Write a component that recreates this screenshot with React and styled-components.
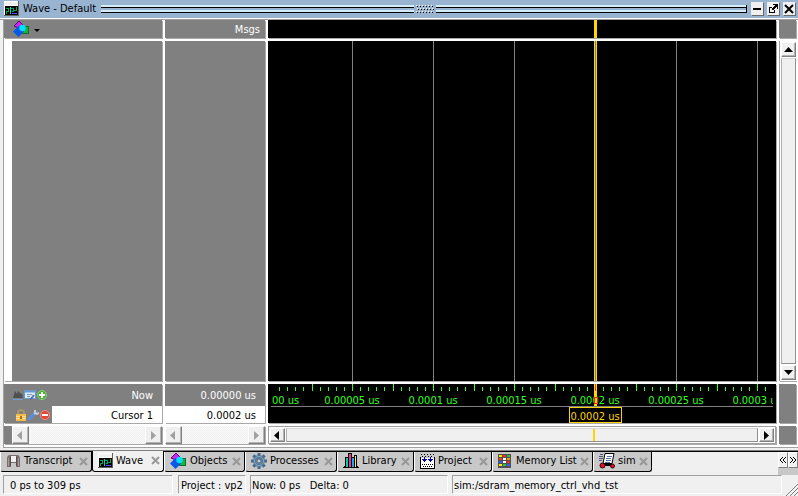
import React from "react";
import styled, { createGlobalStyle } from "styled-components";

const GlobalStyle = createGlobalStyle`
  * { box-sizing: border-box; }
  body {
    margin: 0;
    background: #f0f0f0;
    color: #000;
    font: 11px/16px "DejaVu Sans Condensed", Tahoma, "Noto Sans", sans-serif;
  }
  svg { display: block; flex: none; }
`;

const Window = styled.main`
  display: flex;
  flex-direction: column;
  min-height: 100vh;
  overflow: hidden;
`;

const TitleBar = styled.header`
  display: flex;
  align-items: center;
  height: 20px;
  padding: 0 3px 2px 4px;
  background: #99b4d1;
  border-bottom: 1px solid #a0a0a0;
  box-shadow: inset 0 -1px 0 #fff;
`;

const Title = styled.h1`
  margin: 0 5px 0 4px;
  font: inherit;
  white-space: nowrap;
`;

const Stripes = styled.div`
  flex: ${(p) => (p.$end ? "310" : "312")};
  height: 8px;
  background: linear-gradient(
    #d2ecfa 0 2px, #000 2px 3px, #99b4d1 3px 5px,
    #d2ecfa 5px 7px, #000 7px 8px
  );
  border-right: ${(p) => (p.$end ? "1px solid #000" : "0")};
`;

const TitleButtons = styled.div`
  display: flex;
  gap: 4px;
  margin-left: 4px;
`;

const TitleButton = styled.button`
  display: grid;
  place-items: center;
  width: 12px;
  height: 13px;
  padding: 0;
  border: 0;
  background: #f0f0f0;
  box-shadow: 1px 1px 0 #696969;
`;

const Panes = styled.section`
  flex: 1;
  display: grid;
  grid-template-columns: 158px 100px minmax(0, 1fr) 17px;
  grid-template-rows: 18px minmax(0, 1fr) 39px 18px;
  gap: 3px;
  margin: 0 0 2px 3px;
  padding: 0 2px 3px 0;
  background: #fff;
  border-left: 1px solid #a0a0a0;
  border-bottom: 1px solid #a0a0a0;
`;

const Pane = styled.div`
  display: flex;
  flex-direction: ${(p) => (p.$column ? "column" : "row")};
  align-items: ${(p) => (p.$column ? "stretch" : "center")};
  justify-content: ${(p) => (p.$right ? "flex-end" : "flex-start")};
  min-width: 0;
  padding: ${(p) => p.$pad || "0"};
  background: ${(p) => p.$bg || "#808080"};
  color: #fff;
  box-shadow: 1px 1px 0 #a9a9a9;
`;

const MenuButton = styled.button`
  display: flex;
  align-items: center;
  gap: 4px;
  padding: 0;
  border: 0;
  background: none;
`;

const NameList = styled.div`
  flex: 1;
  border-left: 8px solid #fff;
`;

const CursorRow = styled.div`
  display: flex;
  align-items: center;
  height: ${(p) => (p.$selected ? "17px" : "22px")};
  color: ${(p) => (p.$selected ? "#000" : "#fff")};
`;

const CursorTools = styled.div`
  display: flex;
  width: 48px;
  padding-left: ${(p) => (p.$selected ? "11px" : "8px")};
`;

const ToolButton = styled.button`
  width: 12px;
  height: 14px;
  padding: 0;
  border: 0;
  background: none;
`;

const CursorText = styled.div`
  flex: 1;
  align-self: stretch;
  display: flex;
  align-items: center;
  justify-content: flex-end;
  padding: 2px 9px 0 0;
  background: ${(p) => (p.$selected ? "#fff" : "transparent")};
`;

const ScrollTrack = styled.div`
  flex: 1;
  align-self: stretch;
  display: flex;
  flex-direction: ${(p) => (p.$vertical ? "column" : "row")};
  gap: 1px;
  padding: ${(p) => (p.$stippled ? "0" : "1px")};
  background: ${(p) =>
    p.$stippled
      ? "repeating-conic-gradient(#f0f0f0 0 25%, #fafafa 0 50%) 0 0 / 2px 2px"
      : "#fff"};
  border: ${(p) => (p.$stippled ? "0" : "1px solid #a0a0a0")};
  border-width: ${(p) => (p.$vertical ? "0 0 0 1px" : null)};
`;

const ScrollButton = styled.button`
  display: grid;
  place-items: center;
  flex: none;
  width: ${(p) => (p.$wide ? "17px" : "15px")};
  min-height: ${(p) => (p.$tall ? "15px" : "0")};
  padding: 0;
  background: #f0f0f0;
  border: 1px solid;
  border-color: #fff #808080 #808080 #fff;
  box-shadow: inset -1px -1px 0 #b4b4b4;
`;

const Thumb = styled.div`
  flex: 1;
  background: #f0f0f0;
  border: 1px solid;
  border-color: #d8d8d8 #909090 #909090 #b0b0b0;
`;

const Spacer = styled.div`
  flex: 1;
`;

const TabBar = styled.nav`
  display: flex;
  height: 25px;
  padding-top: 1px;
  border-top: 1px solid #808080;
  background: linear-gradient(#000 0 1px, #f0f0f0 1px);
`;

const Tab = styled.div`
  display: flex;
  align-items: center;
  flex: none;
  width: ${(p) => p.$width}px;
  height: ${(p) => (p.$active ? "21px" : "20px")};
  margin-top: ${(p) => (p.$active ? "-1px" : "0")};
  padding: 0 3px 1px 5px;
  background: ${(p) => (p.$active ? "#f0f0f0" : "#c8c8c8")};
  border: 1px solid #000;
  border-top: 0;
  border-left-color: ${(p) => (p.$active ? "#000" : "#fff")};
  border-radius: 0 0 3px 3px;
`;

const TabLabel = styled.button`
  display: flex;
  align-items: center;
  flex: 1;
  gap: 3px;
  padding: 0;
  border: 0;
  background: none;
  color: inherit;
  font: inherit;
  line-height: 18px;
  white-space: nowrap;
`;

const CloseButton = styled.button`
  width: 9px;
  height: 9px;
  padding: 0;
  border: 0;
  background: none;
`;

const TabScroller = styled.div`
  display: flex;
  width: 20px;
  margin-left: auto;
  padding-bottom: 7px;
  background: #c8c8c8;
`;

const TabScrollButton = styled.button`
  display: grid;
  place-items: center;
  flex: none;
  width: 10px;
  padding: 0;
  background: #f0f0f0;
  border: 1px solid;
  border-color: #fff #808080 #808080 #fff;
`;

const StatusBar = styled.footer`
  display: flex;
  height: 21px;
  padding: 0 0 2px 3px;
`;

const StatusCell = styled.div`
  flex: ${(p) => (p.$width ? "none" : "1")};
  width: ${(p) => (p.$width ? p.$width + "px" : "auto")};
  margin-right: ${(p) => p.$gap}px;
  padding: 1px 0 0 ${(p) => p.$indent || 1}px;
  border: 1px solid;
  border-color: #a0a0a0 #fff #fff #a0a0a0;
  line-height: 17px;
  white-space: pre;
`;

const Grip = styled.div`
  align-self: flex-end;
  margin-bottom: -2px;
`;

/* ---------- drawings ---------- */

const WaveIcon = () => (
  <svg width="15" height="15" shapeRendering="crispEdges">
    <rect width="15" height="15" fill="#606060" />
    <rect width="14" height="14" fill="#fff" />
    <rect x="1" y="1" width="13" height="3" fill="#f0f0f0" />
    <rect x="1" y="5" width="13" height="9" fill="#000" />
    <path d="M2 7.5h3M4.5 7v3M2 10.5h3M7 7.5h3M9.5 7v3M12.5 6v4M10 9.5h3M8 10.5h2M2.5 10v3" stroke="#00a850" />
    <path d="M6.5 6v7" stroke="#00c8e8" />
    <path d="M8 12.5h5" stroke="#6040ff" />
  </svg>
);

const ObjectsIcon = () => (
  <svg width="17" height="16">
    <path d="M1 5 6 0l5 5-3 3z" fill="#c828e8" stroke="#600080" />
    <rect x="9.5" y="5.5" width="6" height="7" fill="#20b040" stroke="#107028" />
    <path d="M0 10.5 5.500 5l5.500 5.500L5.500 16z" fill="#0858e8" />
    <circle cx="9.5" cy="7" r="3.2" fill="#00e0ff" />
  </svg>
);

const TranscriptIcon = () => (
  <svg width="15" height="15">
    <path d="M1 13V5q0-4 3-4h7q3 0 3 4v8h-4V9H5v4z" fill="#786c6c" />
    <path d="M5 2h5v6H5z" fill="#f0f0f0" />
    <path d="M2.5 12V4M12.500 12V4" stroke="#a89c9c" />
    <path d="M4.5 12V3M10.500 12V3" stroke="#584c4c" />
  </svg>
);

const TEETH = [0, 45, 90, 135, 180, 225, 270, 315];
const GearIcon = () => (
  <svg width="16" height="16" viewBox="0 0 16 16">
    {TEETH.map((a) => (
      <rect key={a} x="6.5" y="0" width="3" height="4" fill="#46688a" transform={`rotate(${a} 8 8)`} />
    ))}
    <circle cx="8" cy="8" r="4.3" fill="none" stroke="#56799a" strokeWidth="3.4" />
    <circle cx="8" cy="8" r="4.6" fill="none" stroke="#86a6c2" />
    <circle cx="8" cy="8" r="2.2" fill="#c8c8c8" stroke="#34526e" />
  </svg>
);

const LibraryIcon = () => (
  <svg width="16" height="16" shapeRendering="crispEdges">
    <path d="M0 14.5h16M1 13.5h14" stroke="#000" />
    <rect x="2" y="4" width="4" height="10" fill="#000" />
    <rect x="3" y="5" width="2" height="9" fill="#00d0a0" />
    <rect x="5" y="0" width="4" height="14" fill="#000" />
    <rect x="6" y="1" width="2" height="13" fill="#f030a0" />
    <rect x="8" y="4" width="4" height="10" fill="#000" />
    <rect x="9" y="5" width="2" height="9" fill="#20a0ff" />
    <path d="M11 2h3v12h-3z" fill="#000" />
    <path d="M12 3h1v11h-1z" fill="#ffe840" />
  </svg>
);

const ProjectIcon = () => (
  <svg width="15" height="15" shapeRendering="crispEdges">
    <rect y="4" width="15" height="10" fill="#fff" />
    <path d="M.5 3v11.5h14V3" fill="none" stroke="#000" />
    <path d="M1 .5h13M2 2.5h12" stroke="#000" strokeDasharray="1 2" />
    <path d="M4.5 3v3M10.5 3v3" stroke="#0000a0" />
    <path d="M2 5h5v1H6v1H5v1H4V7H3V6H2zM8 5h5v1h-1v1h-1v1h-1V7H9V6H8z" fill="#0000a0" />
    <path d="M2 10.5h11M3 12.5h10" stroke="#000" strokeDasharray="1 1" />
  </svg>
);

const MEMORY_COLORS = [
  "#ffe800", "#f03020", "#30c030",
  "#f04020", "#ffffff", "#ff9800",
  "#3060f0", "#ffffff", "#e03030",
  "#ffe800", "#30c030", "#3060f0",
];
const MemoryIcon = () => (
  <svg width="15" height="14" shapeRendering="crispEdges">
    <rect width="13" height="14" fill="#505050" />
    {MEMORY_COLORS.map((c, i) => (
      <rect key={i} x={1 + (i % 3) * 4} y={1 + Math.floor(i / 3) * 3} width="3" height="2" fill={c} />
    ))}
  </svg>
);

const SimIcon = () => (
  <svg width="16" height="16">
    <path d="M6 .5h9l-2 10H4z" fill="#fff" stroke="#000" />
    <path d="M8 3.5h5M7 5.5h5M7 7.5h5M6 9.5h5" stroke="#5070a0" />
    <path d="M1 1.5h3M0 3.5h4M0 5.5h4M0 7.5h3" stroke="#505880" />
    <path d="M3 12h10" stroke="#000" strokeWidth="2" />
    <circle cx="3.5" cy="12.5" r="2.5" fill="#e01030" stroke="#300" />
    <circle cx="13.5" cy="13" r="2" fill="#e01030" stroke="#300" />
  </svg>
);

const CloseIcon = () => (
  <svg width="9" height="9">
    <path d="M1 1l7 7M8 1 1 8" stroke="#989898" strokeWidth="2" />
  </svg>
);

const FilterIcon = () => (
  <svg width="12" height="14">
    <path d="M1 10l2-7 2 3 1-3 3 3 1-1 1 5z" fill="#505050" />
    <path d="M1 11.5h10" stroke="#6ca0d8" />
  </svg>
);
const NoteIcon = () => (
  <svg width="12" height="14">
    <rect x=".5" y="2.5" width="11" height="8" fill="#d8ecff" stroke="#6c98d0" />
    <path d="M1 3.5h10" stroke="#6c98d0" strokeWidth="2" />
    <path d="M3 6.5h5M3 8.5h3" stroke="#8898b0" />
    <path d="M6 12l4-5" stroke="#5870a0" strokeWidth="2" />
  </svg>
);
const RoundIcon = ({ fill, edge, plus }) => (
  <svg width="12" height="14">
    <circle cx="6" cy="7" r="4.5" fill={fill} stroke={edge} />
    <path d={plus ? "M3 7h6M6 4v6" : "M3 7h6"} stroke="#fff" strokeWidth="2" />
  </svg>
);
const LockIcon = () => (
  <svg width="12" height="14">
    <path d="M3 7V5a3 3 0 0 1 6 0v2" fill="none" stroke="#b89868" strokeWidth="1.5" />
    <rect x="1" y="6" width="10" height="7" fill="#f4bc48" />
    <path d="M1 8.5h10M1 10.5h10" stroke="#ffe08c" />
    <rect x="5" y="8" width="2" height="3" fill="#a87020" />
  </svg>
);
const WrenchIcon = () => (
  <svg width="12" height="14">
    <path d="M2 11l5-5" stroke="#5890dc" strokeWidth="3" strokeLinecap="round" />
    <path d="M7 6l2-2M8 2v3l2 1 2-1" stroke="#c0ccdc" strokeWidth="2" fill="none" />
  </svg>
);

const ARROWS = {
  left: "M7 1v9L2 5.5z",
  right: "M3 1v9l5-4.5z",
  up: "M1 8h9L5.5 3z",
  down: "M1 3h9L5.5 8z",
};
const Arrow = ({ dir, fill = "#000" }) => (
  <svg width="11" height="11">
    <path d={ARROWS[dir]} fill={fill} />
  </svg>
);

const GripDots = () => (
  <svg width="22" height="10" shapeRendering="crispEdges">
    {[1, 4, 7].map((y, r) =>
      [0, 1, 2, 3, 4, 5].map((c) => {
        const x = 2 + c * 3 + (r === 1 ? 1 : 0);
        return (
          <g key={y + "-" + c}>
            <rect x={x} y={y} width="1" height="1" fill="#fff" />
            <rect x={x + 1} y={y + 1} width="1" height="1" fill="#000" />
          </g>
        );
      })
    )}
  </svg>
);

/* ---------- waveform ---------- */

const STEP = 81;
const ORIGIN = 3;
const CURSOR_X = 326;
const YELLOW = "#ffd400";
const GREEN = "#32ff1e";
const LABELS = ["0.00005 us", "0.0001 us", "0.00015 us", "0.0002 us", "0.00025 us", "0.0003 us"];

const Canvas = styled.svg`
  flex: 1;
  align-self: stretch;
  width: 100%;
  min-height: 0;
  font-size: 11px;
`;

const WaveArea = styled.div`
  flex: 1;
  align-self: stretch;
  min-width: 0;
  background: linear-gradient(90deg,
    transparent 0 ${CURSOR_X}px, ${YELLOW} ${CURSOR_X}px ${CURSOR_X + 1}px,
    ${(p) => (p.$lines ? "#808080" : YELLOW)} ${CURSOR_X + 1}px ${CURSOR_X + 2}px,
    ${YELLOW} ${CURSOR_X + 2}px ${CURSOR_X + 3}px, transparent ${CURSOR_X + 3}px),
    ${(p) =>
      p.$lines
        ? `repeating-linear-gradient(90deg, transparent 0 80px, #808080 80px 81px) 4px 0`
        : "none"};
  background-repeat: no-repeat;
`;

const Timeline = () => (
  <Canvas height="39" shapeRendering="crispEdges">
    <rect x={CURSOR_X} width="3" height="22" fill={YELLOW} />
    {Array.from({ length: 61 }, (_, i) => {
      const x = ORIGIN + Math.round((i + 1) * 8.1);
      const major = (i + 1) % 5 === 0;
      return (
        <rect
          key={i}
          x={x}
          y={major ? 0 : 3}
          width="1"
          height={major ? 7 : 4}
          fill={x === CURSOR_X + 1 ? "#e04000" : GREEN}
        />
      );
    })}
    <svg x="3" width="502" height="39">
      <text x="1" y="20" fill={GREEN}>00 us</text>
      {LABELS.map((t, i) => (
        <text key={t} x={(i + 1) * STEP} y="20" textAnchor="middle" fill={GREEN}>{t}</text>
      ))}
    </svg>
    <rect x={CURSOR_X} y="11" width="3" height="11" fill={YELLOW} />
    <rect x={CURSOR_X} y="13" width="3" height="6" fill="none" stroke="#e03000" />
    <rect x="3" y="22" width="502" height="1" fill="#808080" />
    <rect x="301.5" y="23.5" width="52" height="15" fill="#000" stroke={YELLOW} />
    <text x={CURSOR_X + 1} y="36" textAnchor="middle" fill={YELLOW}>0.0002 us</text>
  </Canvas>
);

const Marker = styled.div`
  width: 2px;
  height: 100%;
  margin-left: 65%;
  background: ${YELLOW};
`;

const SmallScroll = ({ label }) => (
  <ScrollTrack $stippled>
    <ScrollButton $wide aria-label={`Scroll ${label} left`}><Arrow dir="left" fill="#a0a0a0" /></ScrollButton>
    <Spacer />
    <ScrollButton $wide aria-label={`Scroll ${label} right`}><Arrow dir="right" fill="#a0a0a0" /></ScrollButton>
  </ScrollTrack>
);

const TABS = [
  { name: "Transcript", width: 92, Icon: TranscriptIcon },
  { name: "Wave", width: 72, Icon: WaveIcon, active: true },
  { name: "Objects", width: 81, Icon: ObjectsIcon },
  { name: "Processes", width: 92, Icon: GearIcon },
  { name: "Library", width: 77, Icon: LibraryIcon },
  { name: "Project", width: 78, Icon: ProjectIcon },
  { name: "Memory List", width: 101, Icon: MemoryIcon },
  { name: "sim", width: 59, Icon: SimIcon },
];

export default function App() {
  return (
    <Window>
      <GlobalStyle />
      <TitleBar>
        <WaveIcon />
        <Title>Wave - Default</Title>
        <Stripes />
        <GripDots />
        <Stripes $end />
        <TitleButtons>
          <TitleButton aria-label="Minimize">
            <svg width="10" height="10"><path d="M1 5h8" stroke="#000" strokeWidth="2" /></svg>
          </TitleButton>
          <TitleButton aria-label="Undock">
            <svg width="10" height="10" shapeRendering="crispEdges">
              <path d="M4 3.5H1.5v5h5V6M5 .5h4.5V5" fill="none" stroke="#000" />
              <path d="M4 6l5-5" stroke="#000" strokeWidth="2" />
            </svg>
          </TitleButton>
          <TitleButton aria-label="Close">
            <svg width="10" height="10"><path d="M1 1l8 8M9 1 1 9" stroke="#000" strokeWidth="2" /></svg>
          </TitleButton>
        </TitleButtons>
      </TitleBar>

      <Panes>
        <Pane $pad="0 0 0 9px">
          <MenuButton aria-label="Object filter">
            <ObjectsIcon />
            <svg width="6" height="5"><path d="M0 2h6L3 5z" fill="#000" /></svg>
          </MenuButton>
        </Pane>
        <Pane $right $pad="2px 5px 0 0">Msgs</Pane>
        <Pane $bg="#000"><WaveArea /></Pane>
        <Pane />

        <Pane $column><NameList /></Pane>
        <Pane />
        <Pane $bg="#000"><WaveArea $lines /></Pane>
        <Pane $bg="#fff">
          <ScrollTrack $vertical>
            <ScrollButton $tall aria-label="Scroll up"><Arrow dir="up" /></ScrollButton>
            <Thumb />
            <ScrollButton $tall aria-label="Scroll down"><Arrow dir="down" /></ScrollButton>
          </ScrollTrack>
        </Pane>

        <Pane $column>
          <CursorRow>
            <CursorTools>
              <ToolButton aria-label="Find cursor"><FilterIcon /></ToolButton>
              <ToolButton aria-label="Timeline settings"><NoteIcon /></ToolButton>
              <ToolButton aria-label="Add cursor"><RoundIcon fill="#48b038" edge="#8cd080" plus /></ToolButton>
            </CursorTools>
            <CursorText>Now</CursorText>
          </CursorRow>
          <CursorRow $selected>
            <CursorTools $selected>
              <ToolButton aria-label="Lock cursor"><LockIcon /></ToolButton>
              <ToolButton aria-label="Cursor settings"><WrenchIcon /></ToolButton>
              <ToolButton aria-label="Delete cursor"><RoundIcon fill="#e04838" edge="#f09080" /></ToolButton>
            </CursorTools>
            <CursorText $selected>Cursor 1</CursorText>
          </CursorRow>
        </Pane>
        <Pane $column>
          <CursorRow><CursorText>0.00000 us</CursorText></CursorRow>
          <CursorRow $selected><CursorText $selected>0.0002 us</CursorText></CursorRow>
        </Pane>
        <Pane $bg="#000"><Timeline /></Pane>
        <Pane />

        <Pane $pad="0 0 0 8px"><SmallScroll label="names" /></Pane>
        <Pane><SmallScroll label="values" /></Pane>
        <Pane $bg="#fff">
          <ScrollTrack>
            <ScrollButton aria-label="Scroll waves left"><Arrow dir="left" /></ScrollButton>
            <Thumb><Marker /></Thumb>
            <ScrollButton aria-label="Scroll waves right"><Arrow dir="right" /></ScrollButton>
          </ScrollTrack>
        </Pane>
        <Pane />
      </Panes>

      <TabBar aria-label="Windows">
        {TABS.map(({ name, width, Icon, active }) => (
          <Tab key={name} $width={width} $active={active}>
            <TabLabel aria-current={active ? "page" : undefined}><Icon />{name}</TabLabel>
            <CloseButton aria-label={`Close ${name}`}><CloseIcon /></CloseButton>
          </Tab>
        ))}
        <TabScroller>
          <TabScrollButton aria-label="Previous tabs">
            <svg width="8" height="8"><path d="M4 1 1 4l3 3M7 1 4 4l3 3" fill="none" stroke="#000" /></svg>
          </TabScrollButton>
          <TabScrollButton aria-label="Next tabs">
            <svg width="8" height="8"><path d="M1 1l3 3-3 3M4 1l3 3-3 3" fill="none" stroke="#000" /></svg>
          </TabScrollButton>
        </TabScroller>
      </TabBar>

      <StatusBar>
        <StatusCell $width={170} $gap={5} $indent={6}>0 ps to 309 ps</StatusCell>
        <StatusCell $width={68} $gap={4} $indent={2}>Project : vp2</StatusCell>
        <StatusCell $width={198} $gap={4}>{"Now: 0 ps   Delta: 0"}</StatusCell>
        <StatusCell $gap={3}>sim:/sdram_memory_ctrl_vhd_tst</StatusCell>
        <Grip>
          <svg width="13" height="13">
            <path d="M1 13 13 1M5 13l8-8M9 13l4-4" stroke="#808080" />
          </svg>
        </Grip>
      </StatusBar>
    </Window>
  );
}
